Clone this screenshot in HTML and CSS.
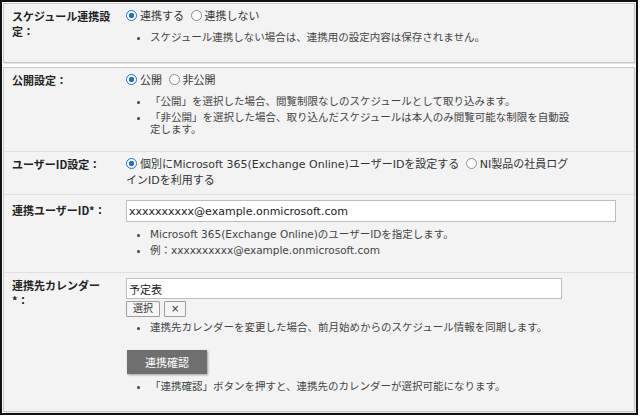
FILE: index.html
```html
<!DOCTYPE html>
<html lang="ja">
<head>
<meta charset="UTF-8">
<title>スケジュール連携設定</title>
<link rel="stylesheet" href="styles.css">
</head>
<body>
  <div class="frame">
    <div class="box box-top">
      <div class="row">
        <div class="label">スケジュール連携設定：</div>
        <div class="value">
          <label class="choice"><input type="radio" name="sync" checked>連携する</label>
          <label class="choice"><input type="radio" name="sync">連携しない</label>
          <ul class="notes">
            <li>スケジュール連携しない場合は、連携用の設定内容は保存されません。</li>
          </ul>
        </div>
      </div>
    </div>

    <div class="box box-main">
      <div class="row">
        <div class="label">公開設定：</div>
        <div class="value">
          <label class="choice"><input type="radio" name="open" checked>公開</label>
          <label class="choice"><input type="radio" name="open">非公開</label>
          <ul class="notes">
            <li>「公開」を選択した場合、閲覧制限なしのスケジュールとして取り込みます。</li>
            <li>「非公開」を選択した場合、取り込んだスケジュールは本人のみ閲覧可能な制限を自動設定します。</li>
          </ul>
        </div>
      </div>

      <div class="row row-narrow">
        <div class="label">ユーザーID設定：</div>
        <div class="value">
          <label class="choice"><input type="radio" name="idmode" checked>個別にMicrosoft 365(Exchange Online)ユーザーIDを設定する</label>
          <label class="choice"><input type="radio" name="idmode">NI製品の社員ログインIDを利用する</label>
        </div>
      </div>

      <div class="row">
        <div class="label label-field">連携ユーザーID*：</div>
        <div class="value">
          <input class="text-field" type="text" value="xxxxxxxxxx@example.onmicrosoft.com">
          <ul class="notes">
            <li>Microsoft 365(Exchange Online)のユーザーIDを指定します。</li>
            <li>例：xxxxxxxxxx@example.onmicrosoft.com</li>
          </ul>
        </div>
      </div>

      <div class="row row-last">
        <div class="label">連携先カレンダー*：</div>
        <div class="value">
          <input class="text-field calendar-field" type="text" value="予定表">
          <div class="small-buttons">
            <button class="small-btn">選択</button>
            <button class="small-btn">×</button>
          </div>
          <ul class="notes">
            <li>連携先カレンダーを変更した場合、前月始めからのスケジュール情報を同期します。</li>
          </ul>
          <button class="confirm-btn">連携確認</button>
          <ul class="notes">
            <li>「連携確認」ボタンを押すと、連携先のカレンダーが選択可能になります。</li>
          </ul>
        </div>
      </div>
    </div>
  </div>
</body>
</html>
```

FILE: styles.css
```css
body {
  margin: 0;
  background-color: #fff;
  font-family: "DejaVu Sans", "Noto Sans CJK JP", sans-serif;
  color: #333;
}
.frame {
  width: 632px;
  height: 409px;
  border: 2px solid #111;
  padding: 1px;
  display: flex;
  flex-direction: column;
  gap: 4px;
}
.box {
  background-color: #f3f3f3;
  border: 1px solid #c6c6c6;
  box-shadow: 1px 1px 0 #e4e4e4;
}
.box-top {
  height: 60px;
  box-sizing: border-box;
}
.box-main {
  flex: 1;
  display: flex;
  flex-direction: column;
}
.row {
  display: grid;
  grid-template-columns: 104px 446px;
  column-gap: 10px;
  padding: 5px 8px;
  border-top: 1px solid #dedede;
}
.row:first-child {
  border-top: none;
}
.row-narrow {
  grid-template-columns: 104px 443px;
}
.row-last {
  flex: 1;
}
.label {
  font-family: "Noto Sans CJK JP", sans-serif;
  font-size: 11px;
  font-weight: bold;
  line-height: 15px;
  color: #222;
}
.label-field {
  padding-top: 3px;
}
.value {
  font-size: 11px;
  line-height: 16px;
  min-width: 0;
}
.choice {
  color: #333;
}
.choice + .choice {
  margin-left: 3px;
}
.choice input {
  appearance: none;
  width: 11px;
  height: 11px;
  margin: 0 3px 0 0;
  border: 1px solid #8c8c8c;
  border-radius: 50%;
  background: #fff;
  box-sizing: border-box;
  vertical-align: -1px;
}
.choice input:checked {
  border-color: #1f6fd6;
  background: radial-gradient(circle, #1f6fd6 0 2.4px, #fff 3px);
}
.notes {
  margin: 6px 0 11px;
  padding-left: 24px;
  font-size: 10.5px;
  line-height: 12px;
  color: #444;
}
.notes li + li {
  margin-top: 4px;
}
.text-field {
  display: block;
  width: 490px;
  height: 22px;
  box-sizing: border-box;
  margin: 0;
  padding: 0 2px;
  border: 1px solid #bdbdbd;
  background: #fff;
  font-family: inherit;
  font-size: 11px;
  color: #222;
}
.text-field + .notes {
  margin-top: 6px;
}
.calendar-field {
  width: 436px;
  height: 21px;
}
.small-buttons {
  display: flex;
  gap: 4px;
  margin-top: 2px;
}
.small-btn {
  height: 16px;
  padding: 0 6px;
  border: 1px solid #9c9c9c;
  border-radius: 1px;
  background: #f6f6f6;
  font-family: inherit;
  font-size: 10px;
  line-height: 14px;
  color: #333;
}
.small-buttons + .notes {
  margin-top: 4px;
  margin-bottom: 17px;
}
.confirm-btn {
  display: block;
  width: 80px;
  height: 24px;
  margin-left: 1px;
  border: none;
  background: #6f6f6f;
  color: #fff;
  font-family: inherit;
  font-size: 11px;
  box-shadow: 1px 1px 2px rgba(0, 0, 0, 0.35);
}
.confirm-btn + .notes {
  margin-top: 6px;
}
```
